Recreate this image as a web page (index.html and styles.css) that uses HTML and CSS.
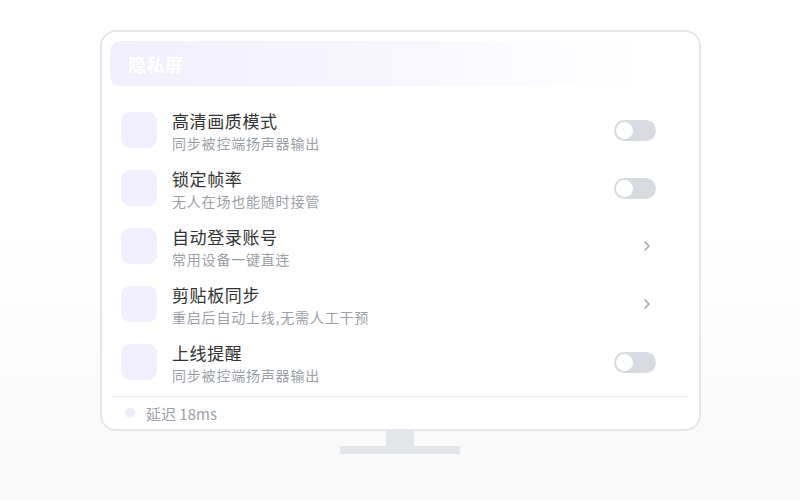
FILE: index.html
```html
<!DOCTYPE html>
<html lang="zh">
<head>
<meta charset="utf-8">
<link rel="stylesheet" href="styles.css">
</head>
<body>
<div class="page">
  <div class="monitor">
    <div class="header"><span class="header-title">隐私屏</span></div>
    <div class="list">
      <div class="row">
        <div class="icon"></div>
        <div class="text"><div class="title">高清画质模式</div><div class="sub">同步被控端扬声器输出</div></div>
        <div class="toggle"><span class="knob"></span></div>
      </div>
      <div class="row">
        <div class="icon"></div>
        <div class="text"><div class="title">锁定帧率</div><div class="sub">无人在场也能随时接管</div></div>
        <div class="toggle"><span class="knob"></span></div>
      </div>
      <div class="row">
        <div class="icon"></div>
        <div class="text"><div class="title">自动登录账号</div><div class="sub">常用设备一键直连</div></div>
        <svg class="chev" width="6" height="10" viewBox="0 0 6 10"><polyline points="1,1 5,5 1,9" fill="none" stroke="#9ca1a9" stroke-width="1.4" stroke-linecap="round" stroke-linejoin="round"/></svg>
      </div>
      <div class="row">
        <div class="icon"></div>
        <div class="text"><div class="title">剪贴板同步</div><div class="sub">重启后自动上线,无需人工干预</div></div>
        <svg class="chev" width="6" height="10" viewBox="0 0 6 10"><polyline points="1,1 5,5 1,9" fill="none" stroke="#9ca1a9" stroke-width="1.4" stroke-linecap="round" stroke-linejoin="round"/></svg>
      </div>
      <div class="row">
        <div class="icon"></div>
        <div class="text"><div class="title">上线提醒</div><div class="sub">同步被控端扬声器输出</div></div>
        <div class="toggle"><span class="knob"></span></div>
      </div>
    </div>
    <div class="footer"><span class="dot"></span><span class="latency">延迟 18ms</span></div>
  </div>
  <div class="neck"></div>
  <div class="base"></div>
</div>
</body>
</html>
```
FILE: styles.css
```css
* { box-sizing: border-box; }
html, body { margin: 0; padding: 0; }
body {
  font-family: "Noto Sans CJK SC", "Noto Sans", sans-serif;
  width: 800px;
  height: 500px;
  overflow: hidden;
  background: linear-gradient(180deg, #ffffff 0%, #ffffff 45%, #f8f8f9 100%);
}
.page {
  display: flex;
  flex-direction: column;
  align-items: center;
  padding-top: 30px;
}
.monitor {
  width: 601px;
  height: 401px;
  border: 2px solid #e3e6eb;
  border-radius: 16px;
  padding: 9px 9px 0 8px;
  display: flex;
  flex-direction: column;
  background: #fff;
  margin-left: 1px;
}
.header {
  height: 45px;
  border-radius: 10px;
  background: linear-gradient(90deg, #f2effd 0%, #f7f5fe 45%, #ffffff 92%);
  display: flex;
  align-items: center;
  padding-left: 18px;
}
.header-title {
  color: #ffffff;
  font-size: 18px;
  font-weight: 700;
  letter-spacing: 0.5px;
}
.list {
  display: flex;
  flex-direction: column;
  padding-top: 15px;
}
.row {
  height: 58px;
  display: flex;
  align-items: center;
  padding-left: 11px;
}
.icon {
  width: 36px;
  height: 36px;
  border-radius: 9px;
  background: #f1eefe;
  flex: none;
}
.text {
  margin-left: 15px;
  flex: 1;
  padding-top: 2px;
}
.title {
  font-size: 17px;
  line-height: 22px;
  color: #333333;
  letter-spacing: 0.6px;
}
.sub {
  font-size: 14px;
  line-height: 18px;
  color: #9ba0a8;
  margin-top: 2px;
  letter-spacing: 0.8px;
}
.toggle {
  width: 42px;
  height: 21px;
  border-radius: 11px;
  background: #d7dae0;
  position: relative;
  margin-right: 34px;
  flex: none;
}
.knob {
  position: absolute;
  left: 2px;
  top: 2px;
  width: 17px;
  height: 17px;
  border-radius: 50%;
  background: #ffffff;
}
.chev {
  margin-right: 40px;
  flex: none;
}
.footer {
  margin-top: 5px;
  margin-left: 2px;
  margin-right: 2px;
  border-top: 1px solid #eceef2;
  height: 33px;
  display: flex;
  align-items: center;
  padding-left: 13px;
}
.dot {
  width: 10px;
  height: 10px;
  border-radius: 50%;
  background: #eeebfd;
  flex: none;
}
.latency {
  margin-left: 11px;
  font-size: 15px;
  color: #9ba0a8;
}
.neck {
  width: 28px;
  height: 15px;
  background: #e2e5ea;
}
.base {
  width: 120px;
  height: 8px;
  background: #e2e5ea;
}
```
